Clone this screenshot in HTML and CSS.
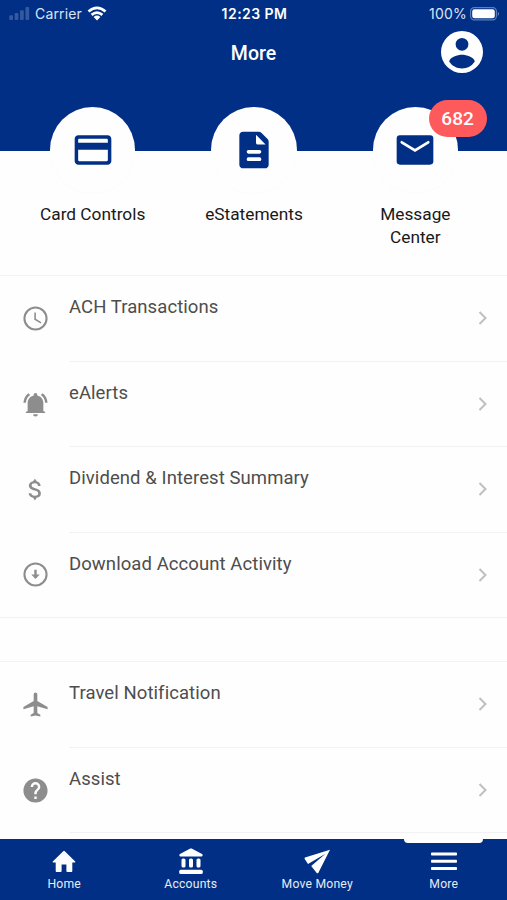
FILE: index.html
```html
<!DOCTYPE html>
<html lang="en">
<head>
<meta charset="utf-8">
<title>More</title>
<link rel="stylesheet" href="styles.css">
</head>
<body>
<div class="app">
  <header class="header">
    <div class="status">
      <div class="status-left">
        <svg class="signal" viewBox="0 0 22 14"><rect x="0" y="9" width="4" height="5" rx="1"/><rect x="5.8" y="6.5" width="4" height="7.5" rx="1"/><rect x="11.6" y="3.5" width="4" height="10.5" rx="1"/><rect x="17.4" y="0" width="4" height="14" rx="1"/></svg>
        <span class="carrier">Carrier</span>
        <svg class="wifi" viewBox="0 0 20 15"><path d="M1.5 5.6Q10-2 18.5 5.6M4.6 8.9Q10 4.3 15.4 8.9" fill="none" stroke="#fff" stroke-width="2.7"/><path d="M6.6 11Q10 8.2 13.4 11L10 14.6Z" fill="#fff"/></svg>
      </div>
      <div class="time">12:23 PM</div>
      <div class="status-right">
        <span class="percent">100%</span>
        <svg class="battery" viewBox="0 0 30 14"><rect x=".6" y=".6" width="25.8" height="12.3" rx="3.6" fill="none" stroke="#5f7db8" stroke-width="1.2"/><rect x="2.2" y="2.2" width="22.6" height="9.1" rx="2.2" fill="#fff"/><path d="M27.8 4.7Q30 6.8 27.8 8.9Z" fill="#7892c4"/></svg>
      </div>
    </div>
    <div class="titlebar">
      <h1 class="title">More</h1>
      <svg class="avatar" viewBox="2 2 20 20"><path fill="#fff" fill-rule="evenodd" d="M12 2a10 10 0 1 0 0 20 10 10 0 0 0 0-20Zm0 3.300a3.050 3.050 0 1 1 0 6.100 3.050 3.050 0 0 1 0-6.100Zm0 14.500c-2.500 0-4.800-1.200-6.100-3.300.3-2.100 4-3.200 6.100-3.200s5.800 1.100 6.100 3.200a7.300 7.300 0 0 1-6.100 3.300Z"/></svg>
    </div>
  </header>

  <section class="shortcuts">
    <div class="shortcut">
      <div class="disc"><svg class="disc-icon" viewBox="0 0 24 24"><path fill-rule="evenodd" d="M20 4H4c-1.110 0-1.990.890-1.990 2L2 18c0 1.110.890 2 2 2h16c1.110 0 2-.890 2-2V6c0-1.110-.890-2-2-2Zm-.8 14.200H4.800c-.5 0-.9-.4-.9-.9V11.900h16.200v5.400c0 .5-.4.900-.9.900ZM20.100 8H3.900V6.500c0-.4.300-.7.700-.7h14.800c.4 0 .7.300.7.700Z"/></svg></div>
      <div class="label">Card Controls</div>
    </div>
    <div class="shortcut">
      <div class="disc"><svg class="disc-icon" viewBox="0 0 24 24"><path fill-rule="evenodd" d="M14.600 2H6c-1.100 0-2 .9-2 2v16c0 1.100.9 2 2 2h12c1.100 0 2-.9 2-2V7.400c0-.5-.2-1-.6-1.400l-3.400-3.400c-.4-.4-.9-.6-1.400-.6ZM15 18H9a1 1 0 0 1 0-2h6a1 1 0 0 1 0 2Zm0-4H9a1 1 0 0 1 0-2h6a1 1 0 0 1 0 2Zm-1.900-6V3.700L18.300 9h-4.200a1 1 0 0 1-1-1Z"/></svg></div>
      <div class="label">eStatements</div>
    </div>
    <div class="shortcut">
      <div class="disc"><svg class="disc-icon" viewBox="0 0 24 24"><rect x="2" y="4" width="20" height="16" rx="1.800"/><path d="M4.800 7.800 12 12.200l7.200-4.400" fill="none" stroke="#fff" stroke-width="1.500" stroke-linecap="round"/></svg><span class="badge">682</span></div>
      <div class="label">Message<br>Center</div>
    </div>
  </section>

  <main class="lists">
    <div class="group">
      <div class="row"><div class="lead"><svg class="icon" viewBox="0 0 24 24"><path d="M12 2a10 10 0 1 0 0 20 10 10 0 0 0 0-20Zm0 18.300a8.300 8.300 0 1 1 0-16.600 8.300 8.300 0 0 1 0 16.600Zm.3-13.300H11v6l5.250 3.150.65-1.130-4.600-2.770Z"/></svg></div><div class="body"><span class="text">ACH Transactions</span><svg class="chevron" viewBox="0 0 10 16"><path d="m1.500 2 6 6-6 6"/></svg></div></div>
      <div class="row"><div class="lead"><svg class="icon" viewBox="0 0 24 24"><path d="M7.580 4.080 6.150 2.650C3.750 4.480 2.170 7.300 2.030 10.500h2c.15-2.650 1.510-4.970 3.550-6.420Zm12.390 6.420h2c-.15-3.200-1.730-6.020-4.120-7.850l-1.420 1.430c2.020 1.450 3.390 3.770 3.540 6.420ZM18.500 11c0-3.270-1.940-5.740-5-6.420V4a1.500 1.500 0 0 0-3 0v.58C7.430 5.260 5.500 7.720 5.500 11v6.300L4 18.200V19h16v-.8l-1.500-.9V11Zm-6.500 11a2 2 0 0 0 2-2h-4a2 2 0 0 0 2 2Z"/></svg></div><div class="body"><span class="text">eAlerts</span><svg class="chevron" viewBox="0 0 10 16"><path d="m1.500 2 6 6-6 6"/></svg></div></div>
      <div class="row"><div class="lead"><svg class="icon" viewBox="0 0 24 24"><path d="M11.800 10.900c-2.270-.59-3-1.200-3-2.150 0-1.090 1.010-1.850 2.700-1.850 1.780 0 2.440.85 2.500 2.100h2.210c-.07-1.720-1.120-3.300-3.210-3.810L11.500 3 10 5.160c-1.940.42-3.500 1.680-3.500 3.610 0 2.310 1.910 3.460 4.700 4.130 2.500.6 3 1.480 3 2.410 0 .69-.49 1.790-2.700 1.790-2.060 0-2.870-.92-2.980-2.100h-2.200c.12 2.190 1.760 3.420 3.680 3.830L11.500 21l1.500-2.150c1.950-.37 3.500-1.500 3.500-3.550 0-2.840-2.430-3.810-4.700-4.400Z"/></svg></div><div class="body"><span class="text">Dividend &amp; Interest Summary</span><svg class="chevron" viewBox="0 0 10 16"><path d="m1.500 2 6 6-6 6"/></svg></div></div>
      <div class="row last"><div class="lead"><svg class="icon" viewBox="0 0 24 24"><path d="M12 2a10 10 0 1 0 0 20 10 10 0 0 0 0-20Zm0 18.300a8.300 8.300 0 1 1 0-16.600 8.300 8.300 0 0 1 0 16.600ZM11 8h2v4h2.500L12 15.700 8.500 12H11Z"/></svg></div><div class="body"><span class="text">Download Account Activity</span><svg class="chevron" viewBox="0 0 10 16"><path d="m1.500 2 6 6-6 6"/></svg></div></div>
    </div>
    <div class="group">
      <div class="row"><div class="lead"><svg class="icon" viewBox="0 0 24 24"><path d="M22 16v-2l-8.500-5V3.500a1.500 1.500 0 0 0-3 0V9L2 14v2l8.500-2.500V19L8 20.500V22l4-1 4 1v-1.500L13.500 19v-5.500Z"/></svg></div><div class="body"><span class="text">Travel Notification</span><svg class="chevron" viewBox="0 0 10 16"><path d="m1.500 2 6 6-6 6"/></svg></div></div>
      <div class="row"><div class="lead"><svg class="icon" viewBox="0 0 24 24"><path d="M12 2C6.480 2 2 6.480 2 12s4.480 10 10 10 10-4.480 10-10S17.520 2 12 2Zm1 17h-2v-2h2v2Zm2.070-7.750-.9.920C13.450 12.900 13 13.500 13 15h-2v-.5c0-1.100.45-2.100 1.170-2.830l1.240-1.260c.37-.36.59-.86.59-1.410a2 2 0 0 0-4 0H8a4 4 0 0 1 8 0c0 .88-.36 1.680-.93 2.250Z"/></svg></div><div class="body"><span class="text">Assist</span><svg class="chevron" viewBox="0 0 10 16"><path d="m1.500 2 6 6-6 6"/></svg></div></div>
    </div>
  </main>

  <nav class="tabs">
    <div class="tab"><svg class="tab-icon" viewBox="0 0 28 28"><path d="M11.600 24v-6.600h4.800V24q0 .9.900.9h4.100q.9 0 .9-.9v-8.600h2.700q.8-.3.200-1L14.800 4.200q-.8-.7-1.600 0L2.800 14.400q-.6.700.2 1h2.700V24q0 .9.900.9h4.100q.9 0 .9-.9Z"/></svg><span>Home</span></div>
    <div class="tab"><svg class="tab-icon" viewBox="0 0 28 28"><path d="M2.500 7.200 13.300 1.600q.7-.3 1.400 0L25.500 7.200q.6 2.300-1 2.300h-21q-1.600 0-1-2.300Z"/><rect x="4.500" y="11.500" width="4" height="9.100" rx="1.600"/><rect x="12" y="11.500" width="4" height="9.100" rx="1.600"/><rect x="19.500" y="11.500" width="4" height="9.100" rx="1.600"/><rect x="2.200" y="22.700" width="23.600" height="4.300" rx="1.600"/></svg><span>Accounts</span></div>
    <div class="tab"><svg class="tab-icon" viewBox="0 0 28 28"><path d="M27 2.800 2 10.600q-.8.400-.3 1.300l3.300 5 17.500-10.200L8.200 18.900l5.500 7.100q1 .8 1.700-.3Z"/></svg><span>Move Money</span></div>
    <div class="tab active"><svg class="tab-icon" viewBox="0 0 28 28"><rect x="1" y="5.400" width="26" height="3.100" rx=".8"/><rect x="1" y="12.700" width="26" height="3.100" rx=".8"/><rect x="1" y="20" width="26" height="3.100" rx=".8"/></svg><span>More</span></div>
  </nav>
</div>
</body>
</html>
```
FILE: styles.css
```css
* { box-sizing: border-box; }
body { margin: 0; background: #fefefe; font-family: Roboto, "Liberation Sans", sans-serif; }
svg { display: block; flex: none; }
.app { width: 507px; height: 900px; display: flex; flex-direction: column; overflow: hidden; }

.header { height: 151px; flex: none; background: #002f85; color: #fff; }
.status { height: 27px; padding: 0 7px 0 9px; display: grid; grid-template-columns: 1fr auto 1fr; align-items: center; font-family: Inter, sans-serif; font-size: 14px; line-height: 27px; }
.status-left, .status-right { display: flex; align-items: center; }
.status-left { color: #dce4f4; }
.status-right { justify-content: flex-end; color: #dce4f4; }
.signal { width: 21px; height: 13px; fill: #34599f; margin-right: 5px; }
.carrier { width: 47px; font-size: 14px; letter-spacing: .15px; white-space: nowrap; }
.wifi { width: 20px; height: 15px; margin-left: 5px; }
.time { font-weight: 600; letter-spacing: .45px; }
.percent { margin-right: 3px; letter-spacing: .2px; }
.battery { width: 30px; height: 14px; }
.titlebar { display: grid; grid-template-columns: 1fr auto 1fr; align-items: center; height: 50px; padding: 0 24px; }
.title { grid-column: 2; margin: 2px 0 0; font-size: 19.500px; font-weight: 500; }
.avatar { width: 42px; height: 42px; justify-self: end; }

.shortcuts { display: grid; grid-template-columns: repeat(3, 1fr); padding: 0 11px 0 12px; height: 168px; margin-top: -44px; flex: none; }
.shortcut { display: flex; flex-direction: column; align-items: center; }
.disc { position: relative; width: 85.500px; height: 86px; border-radius: 50%; background: #fefefe; display: grid; place-items: center; box-shadow: 0 1px 2px rgba(0, 0, 0, .015); }
.disc-icon { width: 44px; height: 44px; fill: #002f85; }
.badge { position: absolute; top: -7px; left: 56px; width: 58px; height: 37px; border-radius: 19px; background: #ff5a5b; color: #fff; font-size: 19px; font-weight: 500; line-height: 38px; text-align: center; }
.label { margin-top: 10px; font-size: 17.300px; line-height: 23px; color: #191919; text-align: center; }

.lists { flex: 1; min-height: 0; overflow: hidden; }
.group { border-top: 1px solid #f2f2f2; }
.group + .group { margin-top: 43px; }
.row { display: flex; height: 85.500px; }
.lead { width: 69px; padding: 0 0 0 20.500px; display: flex; align-items: center; }
.icon { width: 29px; height: 29px; fill: #8d8d8d; }
.body { flex: 1; display: flex; justify-content: space-between; align-items: center; padding-right: 19px; border-bottom: 1px solid #f2f2f2; }
.row.last { border-bottom: 1px solid #f2f2f2; }
.row.last .body { border-bottom: 0; }
.text { align-self: flex-start; margin-top: 19px; font-size: 18.500px; line-height: 24px; letter-spacing: .08px; color: #4d4d4d; }
.chevron { width: 10px; height: 16px; fill: none; stroke: #bfbfbf; stroke-width: 2; }

.tabs { height: 61px; flex: none; background: #002f85; color: #e5ebf7; display: grid; grid-template-columns: repeat(4, 1fr); padding: 0 0 0 1px; }
.tab { position: relative; display: flex; flex-direction: column; align-items: center; padding-top: 8px; font-size: 12.200px; line-height: 16px; letter-spacing: .2px; }
.tab-icon { width: 28px; height: 28px; fill: #fff; margin-bottom: 1px; }
.active::before { content: ""; position: absolute; top: 0; left: 50%; width: 79px; height: 4px; margin-left: -39.500px; background: #fefefe; border-radius: 0 0 4px 4px; }
```
